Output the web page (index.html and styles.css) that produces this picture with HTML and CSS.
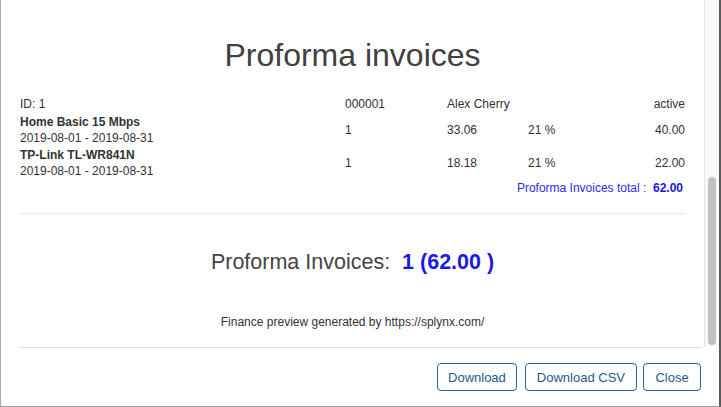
FILE: index.html
```html
<!DOCTYPE html>
<html>
<head>
<meta charset="utf-8">
<link rel="stylesheet" href="styles.css">
</head>
<body>
<div class="modal">
  <div class="body-area">
    <div class="content">
      <h1 class="title">Proforma invoices</h1>
      <div class="grid">
        <div class="c1">ID: 1</div>
        <div>000001</div>
        <div class="nowrap">Alex Cherry</div>
        <div></div>
        <div class="r">active</div>
      </div>
      <div class="grid item">
        <div class="c1"><div class="b">Home Basic 15 Mbps</div><div>2019-08-01 - 2019-08-31</div></div>
        <div>1</div>
        <div>33.06</div>
        <div>21 %</div>
        <div class="r">40.00</div>
      </div>
      <div class="grid item">
        <div class="c1"><div class="b">TP-Link TL-WR841N</div><div>2019-08-01 - 2019-08-31</div></div>
        <div>1</div>
        <div>18.18</div>
        <div>21 %</div>
        <div class="r">22.00</div>
      </div>
      <div class="total">Proforma Invoices total :&nbsp; <b>62.00</b></div>
      <div class="sep"></div>
      <div class="summary">Proforma Invoices:&nbsp; <b>1 (62.00 )</b></div>
      <div class="note">Finance preview generated by https://splynx.com/</div>
    </div>
    <div class="track"><div class="thumb"></div></div>
  </div>
  <div class="footer">
    <button class="btn btn-first">Download</button>
    <button class="btn">Download CSV</button>
    <button class="btn btn-close">Close</button>
  </div>
</div>
</body>
</html>
```
FILE: styles.css
```css
html, body {
  margin: 0;
  padding: 0;
  background: #ffffff;
}
body {
  font-family: "Liberation Sans", Arial, sans-serif;
  color: #333333;
  font-size: 12px;
}
.modal {
  width: 721px;
  height: 407px;
  box-sizing: border-box;
  border-left: 1px solid #a9a9a9;
  border-right: 2px solid #5a5a5a;
  border-bottom: 1px solid #9a9a9a;
  display: flex;
  flex-direction: column;
  overflow: hidden;
}
.body-area {
  height: 347px;
  display: flex;
  flex-direction: row;
  flex: none;
}
.content {
  flex: 1;
  padding: 36px 19px 0 19px;
  overflow: hidden;
}
.title {
  margin: 0 0 22px 0;
  font-size: 32px;
  line-height: 38px;
  font-weight: normal;
  text-align: center;
  color: #404040;
}
.grid {
  display: grid;
  grid-template-columns: 325px 102px 81px 1fr 100px;
  line-height: 16px;
  align-items: center;
  padding-bottom: 2px;
}
.grid.item {
  padding-bottom: 1px;
}
.b { font-weight: bold; }
.r { text-align: right; }
.nowrap { white-space: nowrap; }
.total {
  text-align: right;
  color: #2b2bf0;
  line-height: 16px;
  padding-right: 2px;
}
.total b { color: #1a1ae0; }
.sep {
  height: 1px;
  background: #e8e8e8;
  margin-top: 17px;
}
.summary {
  margin-top: 36px;
  text-align: center;
  font-size: 21.5px;
  line-height: 24px;
  color: #444444;
}
.summary b { color: #1a1ae6; }
.note {
  margin-top: 40px;
  text-align: center;
  line-height: 16px;
  color: #333333;
}
.track {
  width: 15px;
  flex: none;
  background: #f9f9f9;
  border-left: 1px solid #e6e6e6;
  box-sizing: border-box;
  padding-left: 3px;
}
.thumb {
  width: 8px;
  height: 168px;
  margin-top: 177px;
  border-radius: 4px;
  background: #c1c1c1;
}
.footer {
  margin: 0 17px 0 18px;
  border-top: 1px solid #dddddd;
  flex: 1;
  display: flex;
  justify-content: flex-end;
  align-items: flex-start;
  padding-top: 15px;
  padding-right: 1px;
  gap: 6px;
}
.btn {
  height: 28px;
  padding: 0 11px;
  background: #ffffff;
  border: 1px solid #2a6196;
  border-radius: 4px;
  color: #245a8c;
  font-family: "Liberation Sans", Arial, sans-serif;
  font-size: 13px;
  cursor: pointer;
}
.btn-first {
  margin-right: 2px;
  padding: 0 10px;
}
.btn-close {
  min-width: 58px;
}
```
